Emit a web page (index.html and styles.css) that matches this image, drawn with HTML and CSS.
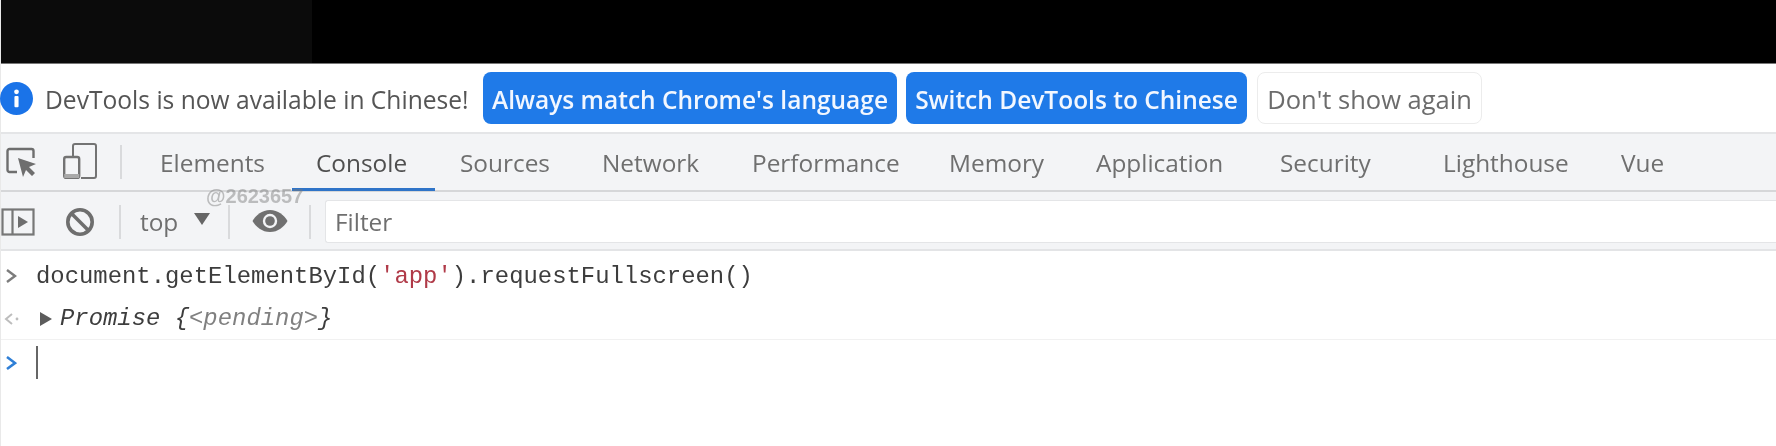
FILE: index.html
```html
<!DOCTYPE html>
<html lang="en">
<head>
<meta charset="utf-8">
<title>DevTools Console</title>
<link rel="stylesheet" href="styles.css">
</head>
<body>
<div class="page">
  <div class="video-top"><div class="video-left"></div></div>

  <div class="infobar">
    <svg class="info-icon" viewBox="0 0 32 32" width="33" height="33"><circle cx="16" cy="16" r="16" fill="#1a73e8"/><rect x="14" y="13.5" width="4" height="11" rx="1" fill="#fff"/><circle cx="16" cy="9.5" r="2.3" fill="#fff"/></svg>
    <span class="info-text">DevTools is now available in Chinese!</span>
    <button class="btn btn-primary btn-always">Always match Chrome's language</button>
    <button class="btn btn-primary btn-switch">Switch DevTools to Chinese</button>
    <button class="btn btn-plain">Don't show again</button>
  </div>

  <div class="tabbar">
    <div class="tool-icons">
      <svg class="icon-inspect" viewBox="0 0 31 30" width="31" height="30" fill="none"><path d="M11 25H3.5a2 2 0 0 1-2-2V4a2 2 0 0 1 2-2h22a2 2 0 0 1 2 2v7" stroke="#6e6e6e" stroke-width="2.4"/><path d="M12 11l18 6-7 3 6 6-3 3-6-6-3 7z" fill="#6e6e6e"/></svg>
      <svg class="icon-device" viewBox="0 0 34 36" width="34" height="36" fill="none"><path d="M10 15V3a2 2 0 0 1 2-2h19a2 2 0 0 1 2 2v30a2 2 0 0 1-2 2H18" stroke="#737373" stroke-width="2"/><rect x="1.2" y="14" width="15" height="21" rx="2" stroke="#737373" stroke-width="2.4"/><rect x="1.2" y="31" width="15" height="4" fill="#a9a9a9"/></svg>
      <span class="sep sep-tabs"></span>
    </div>
    <nav class="tabs">
      <span class="tab">Elements</span>
      <span class="tab tab-active">Console</span>
      <span class="tab">Sources</span>
      <span class="tab">Network</span>
      <span class="tab">Performance</span>
      <span class="tab">Memory</span>
      <span class="tab">Application</span>
      <span class="tab">Security</span>
      <span class="tab">Lighthouse</span>
      <span class="tab">Vue</span>
    </nav>
  </div>

  <div class="filterbar">
    <svg class="icon-sidebar" viewBox="0 0 34 28" width="34" height="28" fill="none"><rect x="1.5" y="1.5" width="31" height="25" stroke="#777" stroke-width="2.2"/><path d="M11.5 1.5v25" stroke="#777" stroke-width="2.2"/><path d="M17 8l10 6-10 6z" fill="#6e6e6e"/></svg>
    <svg class="icon-block" viewBox="0 0 30 30" width="30" height="30" fill="none"><circle cx="15" cy="15" r="12.2" stroke="#6e6e6e" stroke-width="3.6"/><path d="M6.5 6.5l17 17" stroke="#6e6e6e" stroke-width="3.6"/></svg>
    <span class="sep sep-one"></span>
    <span class="context">top</span>
    <span class="caret-down"></span>
    <span class="sep sep-two"></span>
    <svg class="icon-eye" viewBox="0 0 36 24" width="36" height="24"><path d="M18 1C10 1 4 6 0.500 12 4 18 10 23 18 23s14-5 17.500-11C32 6 26 1 18 1z" fill="#707070"/><circle cx="18" cy="12" r="7.200" fill="#f3f4f6"/><circle cx="18" cy="12" r="4.800" fill="#707070"/></svg>
    <span class="sep sep-three"></span>
    <div class="filter-input">Filter</div>
  </div>

  <div class="watermark">@2623657</div>

  <div class="console">
    <div class="row row-input">
      <svg class="chev" viewBox="0 0 12 16" width="12" height="16" fill="none"><path d="M2 2l8 6-8 6" stroke="#7c7c7c" stroke-width="2.400"/></svg>
      <code class="code">document.getElementById(<span class="str">'app'</span>).requestFullscreen()</code>
    </div>
    <div class="row row-output">
      <svg class="chev" viewBox="0 0 16 14" width="16" height="14" fill="none"><path d="M8 2L2 7l6 5" stroke="#bdbdbd" stroke-width="2"/><circle cx="13" cy="7" r="1.400" fill="#bdbdbd"/></svg>
      <span class="expander"></span>
      <code class="code code-italic">Promise {<span class="dim">&lt;pending&gt;</span>}</code>
    </div>
    <div class="row row-prompt">
      <svg class="chev" viewBox="0 0 12 16" width="12" height="16" fill="none"><path d="M2 2l8 6-8 6" stroke="#2f7fd6" stroke-width="2.600"/></svg>
      <span class="text-caret"></span>
    </div>
  </div>
</div>
</body>
</html>
```

FILE: styles.css
```css
* { box-sizing: border-box; }
html, body { margin: 0; padding: 0; background: #fff; }
body { width: 1776px; height: 446px; overflow: hidden; font-family: "Open Sans", "Noto Sans", sans-serif; }

.page { position: relative; width: 1776px; height: 446px; border-left: 1px solid #e9e9e9; filter: blur(0.55px); }

.video-top { height: 64px; background: #000; border-bottom: 1px solid #777; }
.video-left { width: 311px; height: 63px; background: #0b0b0b; }

.infobar { height: 70px; display: flex; align-items: center; background: #fff; border-bottom: 2px solid #e4e5e7; }
.info-icon { flex: none; margin-left: -1px; }
.info-text { margin-left: 12px; width: 438px; padding-top: 2px; font-size: 24.6px; color: #555; white-space: nowrap; flex: none; }
.btn { height: 52px; border-radius: 8px; font: 24.5px "Open Sans", "Noto Sans", sans-serif; padding: 2px 0 0; flex: none; white-space: nowrap; }
.btn-primary { background: #1f7ae8; color: #f2f7ff; border: none; font-weight: 600; }
.btn-always { width: 414px; }
.btn-switch { width: 341px; margin-left: 9px; }
.btn-plain { width: 225px; margin-left: 10px; background: #fff; border: 1px solid #ececec; color: #6c6c6c; font-size: 25.5px; font-weight: 500; }

.tabbar { height: 58px; display: flex; background: #f3f4f6; border-bottom: 2px solid #d6d7d9; }
.tool-icons { width: 159px; flex: none; display: flex; align-items: center; padding-left: 5px; }
.icon-inspect { flex: none; }
.icon-device { flex: none; margin-left: 26px; margin-top: -2px; }
.sep { display: block; width: 2px; background: #d9dadc; flex: none; }
.sep-tabs { height: 34px; margin-left: 23px; }

.tabs { display: grid; grid-template-columns: 156px 144px 142px 150px 197px 147px 184px 163px 178px 60px; align-items: stretch; }
.tab { display: flex; align-items: center; font-size: 24.4px; color: #6f6f6f; white-space: nowrap; }
.tab-active { position: relative; color: #4f4f4f; }
.tab-active::after { content: ""; position: absolute; left: -24px; width: 143px; bottom: -1px; height: 3px; background: #2f74c8; }

.filterbar { height: 59px; display: flex; align-items: center; padding-top: 2px; background: #f3f4f6; border-bottom: 2px solid #e3e4e6; }
.icon-sidebar { flex: none; }
.icon-block { flex: none; margin-left: 30px; }
.sep-one { height: 34px; margin-left: 24px; }
.context { margin-left: 19px; width: 54px; font-size: 24.4px; color: #6f6f6f; flex: none; }
.caret-down { flex: none; width: 0; height: 0; border-left: 8px solid transparent; border-right: 8px solid transparent; border-top: 12px solid #666; margin-bottom: 6px; }
.sep-two { height: 34px; margin-left: 18px; }
.icon-eye { flex: none; margin-left: 22px; margin-bottom: 2px; }
.sep-three { height: 34px; margin-left: 21px; }
.filter-input { flex: 1; height: 43px; margin-left: 14px; background: #fff; border: 1px solid #e4e5e7; border-right: none; border-radius: 3px 0 0 3px; font-size: 24.4px; color: #6f6f6f; display: flex; align-items: center; padding-left: 9px; }

.watermark { position: absolute; left: 205px; top: 185px; font: bold 20px "Liberation Sans", sans-serif; color: rgba(120, 120, 120, 0.45); }

.console { background: #fff; }
.row { display: flex; align-items: center; padding-left: 4px; }
.row-input { height: 47px; padding-top: 3px; }
.row-output { height: 42px; border-bottom: 1px solid #f1f1f1; }
.row-prompt { height: 45px; }
.chev { flex: none; }
.code { font: 23.9px "Liberation Mono", "DejaVu Sans Mono", monospace; color: #3d3d3d; white-space: pre; margin-left: 19px; }
.str { color: #b03a48; }
.code-italic { font-style: italic; margin-left: 8px; }
.dim { color: #808080; }
.expander { flex: none; width: 0; height: 0; margin-left: 20px; border-top: 7px solid transparent; border-bottom: 7px solid transparent; border-left: 12px solid #5c5c5c; }
.row-output .chev { margin-left: -1px; }
.text-caret { flex: none; width: 1.5px; height: 33px; margin-left: 19px; background: #666; }
```
